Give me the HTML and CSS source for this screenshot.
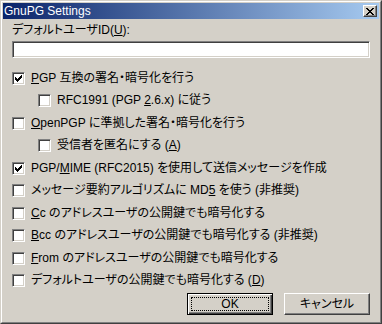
FILE: index.html
```html
<!DOCTYPE html>
<html lang="ja">
<head>
<meta charset="utf-8">
<title>GnuPG Settings</title>
<link rel="stylesheet" href="styles.css">
</head>
<body>
<div class="window">
  <div class="frame">
    <div class="titlebar">
      <span class="title">GnuPG Settings</span>
      <span class="close"><svg width="8" height="7" viewBox="0 0 8 7" shape-rendering="crispEdges"><path d="M0 0h2v1h-2z M6 0h2v1h-2z M1 1h2v1h-2z M5 1h2v1h-2z M2 2h4v1h-4z M3 3h2v1h-2z M2 4h4v1h-4z M1 5h2v1h-2z M5 5h2v1h-2z M0 6h2v1h-2z M6 6h2v1h-2z" fill="#000"/></svg></span>
    </div>
    <div class="body">
      <div class="field-label">デフォルトユーザID(<u>U</u>):</div>
      <div class="edit"></div>
      <div class="options">
        <div class="opt"><span class="cb"><svg class="check" width="11" height="11" viewBox="0 0 11 11" shape-rendering="crispEdges"><path d="M2 4h1v3h-1z M3 5h1v3h-1z M4 6h1v3h-1z M5 5h1v3h-1z M6 4h1v3h-1z M7 3h1v3h-1z M8 2h1v3h-1z" fill="#000"/></svg></span><span class="lbl"><u>P</u>GP 互換の署名・暗号化を行う</span></div>
        <div class="opt sub"><span class="cb"></span><span class="lbl">RFC1991 (PGP <u>2</u>.6.x) に従う</span></div>
        <div class="opt"><span class="cb"></span><span class="lbl"><u>O</u>penPGP に準拠した署名・暗号化を行う</span></div>
        <div class="opt sub"><span class="cb"></span><span class="lbl">受信者を匿名にする (<u>A</u>)</span></div>
        <div class="opt"><span class="cb"><svg class="check" width="11" height="11" viewBox="0 0 11 11" shape-rendering="crispEdges"><path d="M2 4h1v3h-1z M3 5h1v3h-1z M4 6h1v3h-1z M5 5h1v3h-1z M6 4h1v3h-1z M7 3h1v3h-1z M8 2h1v3h-1z" fill="#000"/></svg></span><span class="lbl">PGP/<u>M</u>IME (RFC2015) を使用して送信メッセージを作成</span></div>
        <div class="opt"><span class="cb"></span><span class="lbl">メッセージ要約アルゴリズムに MD<u>5</u> を使う (非推奨)</span></div>
        <div class="opt"><span class="cb"></span><span class="lbl"><u>C</u>c のアドレスユーザの公開鍵でも暗号化する</span></div>
        <div class="opt"><span class="cb"></span><span class="lbl"><u>B</u>cc のアドレスユーザの公開鍵でも暗号化する (非推奨)</span></div>
        <div class="opt"><span class="cb"></span><span class="lbl"><u>F</u>rom のアドレスユーザの公開鍵でも暗号化する</span></div>
        <div class="opt"><span class="cb"></span><span class="lbl">デフォルトユーザの公開鍵でも暗号化する (<u>D</u>)</span></div>
      </div>
      <div class="buttons">
        <button class="btn default"><span class="focus">OK</span></button>
        <button class="btn"><span class="face">キャンセル</span></button>
      </div>
    </div>
  </div>
</div>
</body>
</html>
```
FILE: styles.css
```css
html, body {
  margin: 0;
  padding: 0;
  background: #D4D0C8;
}

.window {
  width: 382px;
  height: 324px;
  box-sizing: border-box;
  border: 1px solid;
  border-color: #D4D0C8 #404040 #404040 #D4D0C8;
  background: #D4D0C8;
  font-family: "Liberation Sans", "Noto Sans CJK JP", sans-serif;
  font-size: 12px;
  font-feature-settings: "palt";
  color: #000;
}

.frame {
  height: 100%;
  box-sizing: border-box;
  border: 1px solid;
  border-color: #FFFFFF #808080 #808080 #FFFFFF;
  padding: 1px;
  display: flex;
  flex-direction: column;
}

.titlebar {
  height: 16px;
  flex: none;
  display: flex;
  align-items: center;
  justify-content: space-between;
  padding: 0 2px 0 1px;
  background: linear-gradient(to right, #0A246A, #A6CAF0);
  color: #FFFFFF;
  line-height: 16px;
}

.close {
  width: 14px;
  height: 12px;
  box-sizing: border-box;
  background: #D4D0C8;
  border: 1px solid;
  border-color: #FFFFFF #404040 #404040 #FFFFFF;
  box-shadow: inset -1px -1px #808080;
  display: flex;
  align-items: center;
  justify-content: center;
}

.close svg {
  display: block;
}

.body {
  flex: 1;
  display: flex;
  flex-direction: column;
  padding: 4px 9px 0 9px;
}

.field-label {
  height: 14px;
  line-height: 14px;
}

u {
  text-decoration: underline;
  text-underline-offset: 1px;
}

.edit {
  margin-top: 4px;
  height: 17px;
  box-sizing: border-box;
  background: #FFFFFF;
  border: 1px solid;
  border-color: #808080 #FFFFFF #FFFFFF #808080;
  box-shadow: inset 1px 1px #404040, inset -1px -1px #D4D0C8;
}

.options {
  margin-top: 14px;
  display: flex;
  flex-direction: column;
  gap: 9.45px;
}

.opt {
  height: 13px;
  display: flex;
  align-items: center;
  gap: 6px;
  white-space: nowrap;
}

.opt.sub {
  padding-left: 26px;
}

.cb {
  width: 13px;
  height: 13px;
  flex: none;
  box-sizing: border-box;
  background: #FFFFFF;
  border: 1px solid;
  border-color: #808080 #FFFFFF #FFFFFF #808080;
  box-shadow: inset 1px 1px #404040, inset -1px -1px #D4D0C8;
}

.check {
  display: block;
}

.lbl {
  line-height: 13px;
}

.buttons {
  margin-top: 6px;
  display: flex;
  justify-content: flex-end;
  gap: 11px;
}

.btn {
  width: 86px;
  height: 22px;
  box-sizing: border-box;
  margin: 0;
  padding: 2px;
  display: flex;
  background: #D4D0C8;
  border: 1px solid;
  border-color: #FFFFFF #404040 #404040 #FFFFFF;
  box-shadow: inset -1px -1px #808080;
  font: inherit;
  color: #000;
}

.btn.default {
  border-color: #000000;
  box-shadow: inset 1px 1px #FFFFFF, inset -1px -1px #404040, inset -2px -2px #808080;
  padding: 3px;
}

.focus, .face {
  flex: 1;
  display: flex;
  align-items: center;
  justify-content: center;
  line-height: 14px;
}

.focus {
  border: 1px dotted #000000;
}
```
